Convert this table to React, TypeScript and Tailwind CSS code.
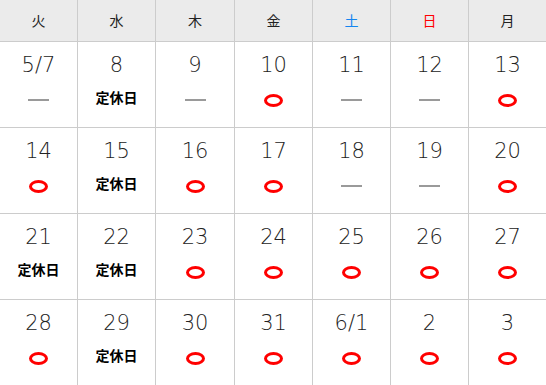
import React from 'react';

type Mark = 'open' | 'closed' | 'none';

const HEADERS = [
  { label: '火', color: 'text-[#222]' },
  { label: '水', color: 'text-[#222]' },
  { label: '木', color: 'text-[#222]' },
  { label: '金', color: 'text-[#222]' },
  { label: '土', color: 'text-[#1485f0]' },
  { label: '日', color: 'text-[#ff0000]' },
  { label: '月', color: 'text-[#222]' },
];

const WEEKS: [string, Mark][][] = [
  [['5/7', 'none'], ['8', 'closed'], ['9', 'none'], ['10', 'open'], ['11', 'none'], ['12', 'none'], ['13', 'open']],
  [['14', 'open'], ['15', 'closed'], ['16', 'open'], ['17', 'open'], ['18', 'none'], ['19', 'none'], ['20', 'open']],
  [['21', 'closed'], ['22', 'closed'], ['23', 'open'], ['24', 'open'], ['25', 'open'], ['26', 'open'], ['27', 'open']],
  [['28', 'open'], ['29', 'closed'], ['30', 'open'], ['31', 'open'], ['6/1', 'open'], ['2', 'open'], ['3', 'open']],
];

function Marker({ mark }: { mark: Mark }) {
  if (mark === 'open') {
    return <div className="w-[19px] h-[13px] rounded-[50%] border-[3px] border-[#ff0000]" />;
  }
  if (mark === 'closed') {
    return <span className="text-[14px] font-bold leading-none text-black mb-[6px]">定休日</span>;
  }
  return <div className="w-[21px] h-[2px] bg-[#9a9a9a]" />;
}

export default function App() {
  return (
    <div
      className="w-[546px] h-[385px] bg-[#cccccc] grid grid-cols-[77px_77px_78px_77px_77px_77px_77px] grid-rows-[41px_85px_85px_85px_85px] gap-px overflow-hidden"
      style={{ fontFamily: '"Noto Sans CJK JP", sans-serif' }}
    >
      {HEADERS.map(h => (
        <div key={h.label} className={`bg-[#ebebeb] flex items-center justify-center text-[14px] ${h.color}`}>
          {h.label}
        </div>
      ))}
      {WEEKS.flat().map(([day, mark], i) => (
        <div key={i} className="bg-white flex flex-col items-center pt-[9px]">
          <span className="text-[21px] leading-[28px] text-[#222] font-['DejaVu_Sans'] font-extralight font-stretch-condensed">{day}</span>
          <div className="h-[42px] flex items-center justify-center">
            <Marker mark={mark} />
          </div>
        </div>
      ))}
    </div>
  );
}
